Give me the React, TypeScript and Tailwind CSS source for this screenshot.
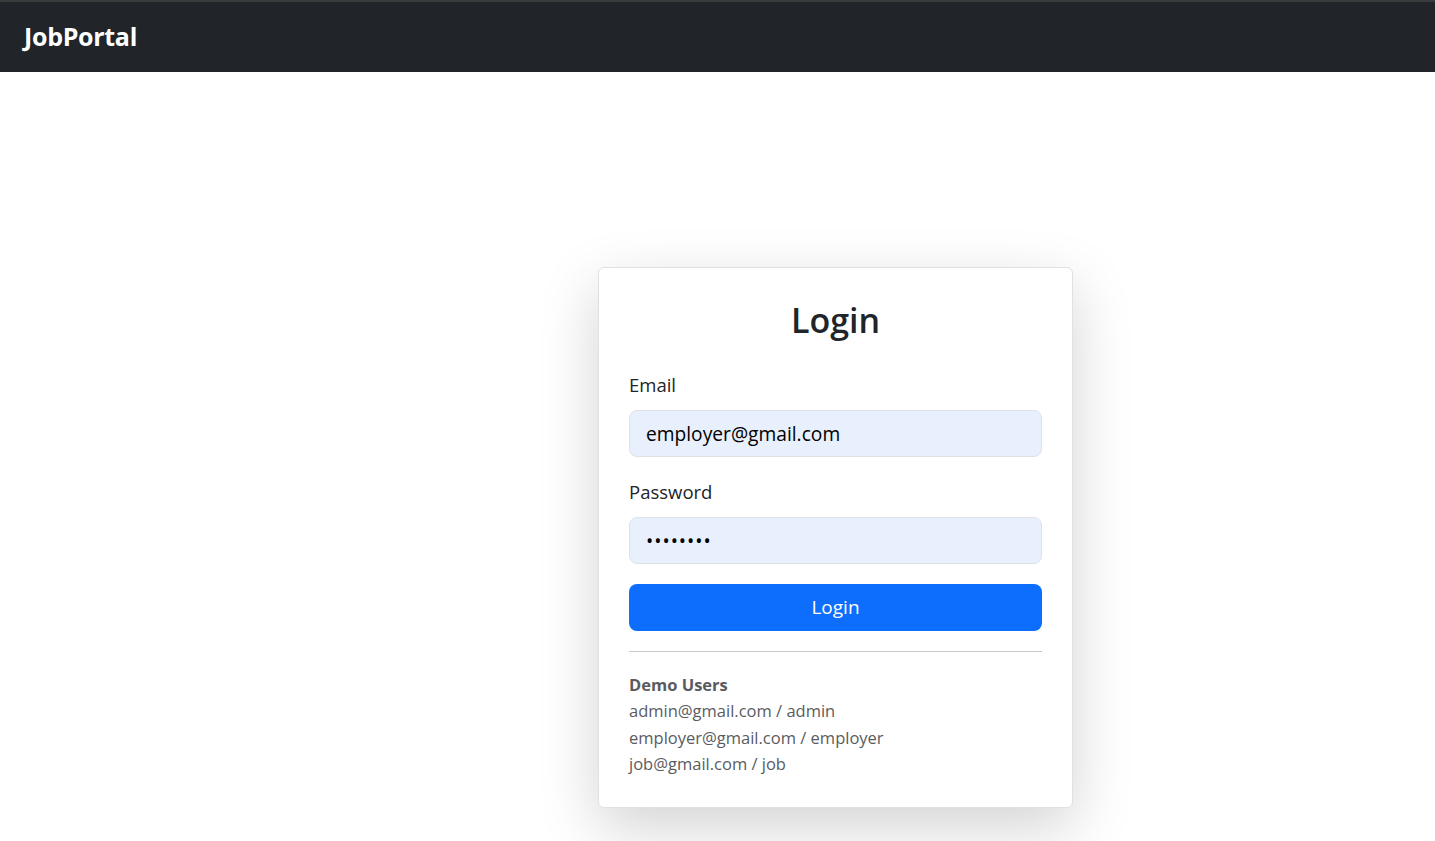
import React from "react";

const demoUsers = [
  "admin@gmail.com / admin",
  "employer@gmail.com / employer",
  "job@gmail.com / job",
];

const App = () => {
  return (
    <div className="min-h-screen bg-white text-[#212529] font-['Open_Sans',sans-serif]">
      {/* navbar */}
      <nav className="h-[72px] bg-[#212529] border-t-2 border-[#3a3b3d] flex items-center px-6">
        <a href="/" className="text-white font-bold text-[25px] tracking-[-0.3px]">
          JobPortal
        </a>
      </nav>

      <div className="pt-[195px] pl-[598px]">
        <div className="w-[475px] bg-white border border-[#dee2e6] rounded-[6px] p-[30px] shadow-[0_20px_60px_rgba(0,0,0,0.175)]">
          <h3 className="text-center text-[34px] font-semibold leading-[44px] mb-[28px]">
            Login
          </h3>

          <form onSubmit={(e) => e.preventDefault()}>
            <div className="mb-[20px]">
              <label className="block text-[18.5px] leading-[30px] mb-[10px]">Email</label>
              <input
                type="email"
                defaultValue="employer@gmail.com"
                className="w-full h-[47px] px-4 text-[19.2px] bg-[#e8f0fe] border border-[#dee2e6] rounded-[8px] text-black outline-none"
              />
            </div>

            <div className="mb-[20px]">
              <label className="block text-[18.5px] leading-[30px] mb-[10px]">Password</label>
              <input
                type="password"
                defaultValue="employer"
                className="w-full h-[47px] px-4 text-[19.2px] bg-[#e8f0fe] border border-[#dee2e6] rounded-[8px] text-black outline-none tracking-[1px]"
              />
            </div>

            <button
              type="submit"
              className="w-full h-[47px] bg-[#0d6efd] text-white text-[19px] rounded-[8px]"
            >
              Login
            </button>
          </form>

          <hr className="my-[20px] border-t border-[#c8c9ca]" />

          <div className="text-[16.5px] leading-[26.25px] text-[#595c5f]">
            <div className="font-bold">Demo Users</div>
            {demoUsers.map((u) => (
              <div key={u}>{u}</div>
            ))}
          </div>
        </div>
      </div>
    </div>
  );
};

export default App;
